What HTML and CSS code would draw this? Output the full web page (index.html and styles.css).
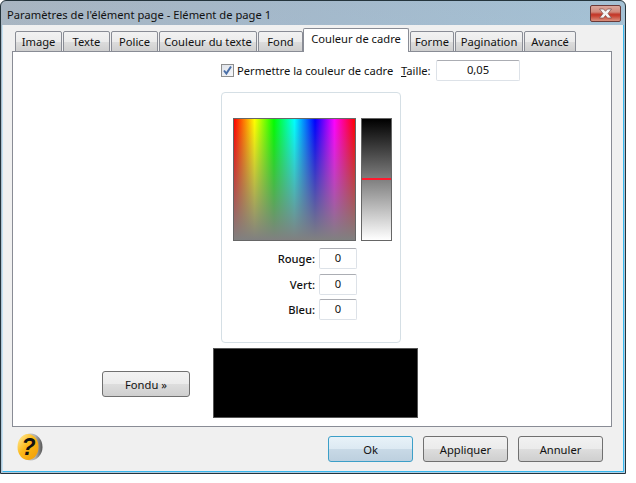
FILE: index.html
```html
<!DOCTYPE html>
<html lang="fr">
<head>
    <meta charset="UTF-8">
    <title>Paramètres de l'élément page</title>
    <link rel="stylesheet" href="styles.css">
</head>
<body>
    <div class="window">
        <div class="titlebar">
            <span class="title">Paramètres de l'élément page - Elément de page 1</span>
            <button class="close-btn" aria-label="Fermer">
                <svg width="17" height="11" viewBox="0 0 17 11"><path d="M2.5 1h4l2 2.300 2-2.300h4L11 5.500 14.500 10h-4l-2-2.500-2 2.500h-4L6 5.500z" fill="#f4f4f4" stroke="#7a4a48" stroke-width=".7"/></svg>
            </button>
        </div>

        <div class="client">
            <!-- Tabs -->
            <div class="tabs">
                <div class="tab tab-image">Image</div>
                <div class="tab tab-texte">Texte</div>
                <div class="tab tab-police">Police</div>
                <div class="tab tab-couleur">Couleur du texte</div>
                <div class="tab tab-fond">Fond</div>
                <div class="tab tab-active">Couleur de cadre</div>
                <div class="tab tab-forme">Forme</div>
                <div class="tab tab-pagination">Pagination</div>
                <div class="tab tab-avance">Avancé</div>
            </div>

            <!-- Tab content -->
            <div class="panel">
                <div class="top-row">
                    <span class="checkbox">
                        <svg width="11" height="11" viewBox="0 0 11 11"><path d="M2 5.500l2.400 3L9 1.500" fill="none" stroke="#4a6fa8" stroke-width="2"/></svg>
                    </span>
                    <span class="check-label">Permettre la couleur de cadre</span>
                    <span class="size-label"><u>T</u>aille:</span>
                    <div class="field field-size">0,05</div>
                </div>

                <div class="group">
                    <div class="picker-row">
                        <div class="spectrum"></div>
                        <div class="luminance"><div class="lum-marker"></div></div>
                    </div>
                    <div class="rgb-row"><span class="rgb-label">Rouge:</span><div class="field field-rgb">0</div></div>
                    <div class="rgb-row"><span class="rgb-label">Vert:</span><div class="field field-rgb">0</div></div>
                    <div class="rgb-row"><span class="rgb-label">Bleu:</span><div class="field field-rgb">0</div></div>
                </div>

                <div class="preview-row">
                    <button class="btn btn-fade">Fondu »</button>
                    <div class="preview"></div>
                </div>
            </div>

            <!-- Bottom buttons -->
            <div class="footer">
                <svg class="help" width="26" height="28" viewBox="0 0 26 28">
                    <defs>
                        <linearGradient id="ring" x1="0" y1="0" x2="1" y2="0">
                            <stop offset="0" stop-color="#e8e8e8"/>
                            <stop offset=".7" stop-color="#b0b0b0"/>
                            <stop offset="1" stop-color="#555"/>
                        </linearGradient>
                        <linearGradient id="face" x1="0" y1="0" x2="1" y2="1">
                            <stop offset="0" stop-color="#fff0a8"/>
                            <stop offset=".45" stop-color="#fcb818"/>
                            <stop offset="1" stop-color="#f09c08"/>
                        </linearGradient>
                    </defs>
                    <ellipse cx="13.500" cy="14" rx="12" ry="13.500" fill="url(#ring)"/>
                    <ellipse cx="11" cy="14" rx="10.500" ry="13" fill="url(#face)"/>
                    <text x="11.500" y="22" class="help-mark">?</text>
                </svg>
                <div class="footer-buttons">
                    <button class="btn btn-default">Ok</button>
                    <button class="btn">Appliquer</button>
                    <button class="btn">Annuler</button>
                </div>
            </div>
        </div>
    </div>
</body>
</html>
```

FILE: styles.css
```css
html, body {
    margin: 0;
    padding: 0;
    background-color: #ffffff;
}
body {
    width: 636px;
    height: 483px;
    overflow: hidden;
    font-family: "Noto Sans", Arial, sans-serif;
    font-size: 11.2px;
    color: #111;
}
.window {
    box-sizing: border-box;
    width: 626px;
    height: 474px;
    border: 1px solid #24343c;
    border-radius: 6px 6px 0 0;
    background:
        linear-gradient(180deg, rgba(150, 150, 150, 0.25) 0%, rgba(190, 225, 245, 0.25) 100%),
        linear-gradient(90deg, #aebfcf 0%, #a8c4dc 50%, #a9cfe9 100%);
    display: flex;
    flex-direction: column;
}
.titlebar {
    height: 24px;
    display: flex;
    justify-content: space-between;
    align-items: flex-start;
    padding: 0 4px 0 6px;
    flex-shrink: 0;
}
.title {
    margin-top: 6px;
    line-height: 16px;
    color: #111;
}
.close-btn {
    width: 31px;
    height: 17px;
    padding: 0;
    border: 1px solid #6b3a38;
    border-radius: 2px;
    background: linear-gradient(180deg, #dba79c 0%, #d08a7c 40%, #c23a2c 55%, #c8402f 65%, #d8907e 100%);
    display: flex;
    align-items: center;
    justify-content: center;
    margin-top: 4px;
}
.client {
    flex: 1;
    margin: 0 1px 1px 1px;
    border-left: 1px solid #c4e2f3;
    border-right: 1px solid #37b8ee;
    border-bottom: 1px solid #37b8ee;
    background-color: #f0f0f0;
    display: flex;
    flex-direction: column;
    padding: 5px 9px 0 9px;
    min-height: 0;
}
.tabs {
    display: flex;
    align-items: flex-end;
    height: 22px;
    padding-left: 3px;
    position: relative;
    z-index: 1;
    margin-bottom: -1px;
}
.tab {
    box-sizing: border-box;
    height: 21px;
    margin-right: 1px;
    border: 1px solid #898c95;
    background: linear-gradient(180deg, #f2f2f2 0%, #ebebeb 50%, #dddddd 51%, #cfcfcf 100%);
    text-align: center;
    line-height: 20px;
    border-radius: 2px 2px 0 0;
}
.tab-image { width: 47px; }
.tab-texte { width: 47px; }
.tab-police { width: 47px; }
.tab-couleur { width: 98px; }
.tab-fond { width: 45px; margin-right: 0; }
.tab-forme { width: 44px; }
.tab-pagination { width: 68px; }
.tab-avance { width: 52px; }
.tab-active {
    width: 106px;
    height: 24px;
    background: #ffffff;
    border-bottom-width: 0;
    line-height: 20px;
    position: relative;
    z-index: 2;
}
.panel {
    box-sizing: border-box;
    width: 600px;
    height: 376px;
    flex-shrink: 0;
    background-color: #ffffff;
    border: 1px solid #898c95;
    padding-left: 208px;
    padding-top: 8px;
}
.top-row {
    display: flex;
    align-items: center;
    height: 21px;
    white-space: nowrap;
}
.checkbox {
    box-sizing: border-box;
    width: 13px;
    height: 13px;
    border: 1px solid #8e8f8f;
    background: linear-gradient(135deg, #dfe3ea, #f6f7f9);
    display: flex;
    align-items: center;
    justify-content: center;
    margin-right: 3px;
}
.check-label {
    width: 164px;
}
.size-label {
    width: 35px;
}
.field {
    box-sizing: border-box;
    background-color: #ffffff;
    border: 1px solid #dde2e8;
    border-top-color: #abadb3;
    border-radius: 2px;
    text-align: center;
}
.field-size {
    width: 84px;
    height: 21px;
    line-height: 18px;
}
.group {
    box-sizing: border-box;
    width: 180px;
    height: 251px;
    margin: 11px 0 0 0;
    border: 1px solid #d5dfe5;
    border-radius: 4px;
    padding: 25px 0 0 11px;
}
.picker-row {
    display: flex;
    gap: 5px;
    margin-bottom: 7px;
}
.spectrum {
    box-sizing: border-box;
    width: 123px;
    height: 123px;
    border: 1px solid #666;
    background:
        linear-gradient(180deg, rgba(128, 128, 128, 0) 0%, #808080 100%),
        linear-gradient(90deg, #ff0000 0%, #ffff00 17%, #00ff00 33%, #00ffff 50%, #0000ff 67%, #ff00ff 83%, #ff0000 100%);
}
.luminance {
    box-sizing: border-box;
    width: 31px;
    height: 123px;
    border: 1px solid #666;
    background: linear-gradient(180deg, #000000 0%, #ffffff 100%);
    padding-top: 59px;
}
.lum-marker {
    height: 2px;
    background-color: #ff1a2e;
}
.rgb-row {
    display: flex;
    justify-content: flex-end;
    align-items: center;
    width: 124px;
    height: 21px;
    margin-bottom: 4px;
}
.picker-row + .rgb-row {
    margin-bottom: 5px;
}
.rgb-label {
    font-weight: 500;
    margin-right: 4px;
}
.field-rgb {
    width: 38px;
    height: 21px;
    line-height: 17px;
}
.preview-row {
    display: flex;
    align-items: flex-end;
    margin: 5px 0 0 -119px;
}
.preview {
    box-sizing: border-box;
    width: 205px;
    height: 70px;
    background-color: #000000;
    border: 1px solid #555;
    margin-left: 23px;
}
.btn {
    box-sizing: border-box;
    width: 85px;
    height: 26px;
    padding: 0;
    font-family: inherit;
    font-size: 11.2px;
    color: #111;
    border: 1px solid #707070;
    border-radius: 3px;
    background: linear-gradient(180deg, #f2f2f2 0%, #ebebeb 50%, #dddddd 51%, #cfcfcf 100%);
}
.btn-fade {
    width: 88px;
    margin-bottom: 21px;
}
.btn-default {
    border-color: #3c9fc8;
    background: linear-gradient(180deg, #e8f2f8 0%, #dce9f2 50%, #c8d9e6 51%, #bdd0df 100%);
}
.footer {
    flex: 1;
    display: flex;
    justify-content: space-between;
    align-items: flex-start;
    padding: 6px 11px 0 5px;
}
.help-mark {
    font-family: "Liberation Sans", Arial, sans-serif;
    font-size: 23px;
    font-weight: bold;
    font-style: italic;
    text-anchor: middle;
    fill: #111;
}
.footer-buttons {
    display: flex;
    gap: 10px;
    padding-top: 3px;
}
```
